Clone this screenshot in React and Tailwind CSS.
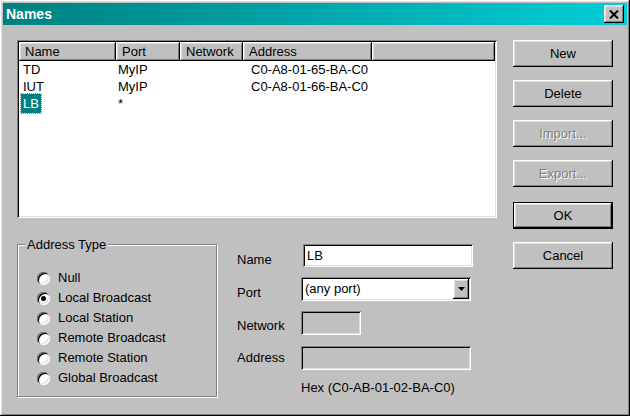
import React from 'react';

const raised = 'shadow-[inset_-1px_-1px_0_#000,inset_1px_1px_0_#fff,inset_-2px_-2px_0_#808080,inset_2px_2px_0_#dfdfdf]';
const sunken = 'shadow-[inset_1px_1px_0_#808080,inset_-1px_-1px_0_#fff,inset_2px_2px_0_#000,inset_-2px_-2px_0_#dfdfdf]';

const rows = [
  { name: 'TD', port: 'MyIP', network: '', address: 'C0-A8-01-65-BA-C0' },
  { name: 'IUT', port: 'MyIP', network: '', address: 'C0-A8-01-66-BA-C0' },
  { name: 'LB', port: '*', network: '', address: '', selected: true },
];

const types = ['Null', 'Local Broadcast', 'Local Station', 'Remote Broadcast', 'Remote Station', 'Global Broadcast'];

function Button({ children, disabled, def }) {
  return (
    <div className={`h-[27px] w-[100px] flex items-center justify-center ${def ? 'mt-[2px] border border-black' : ''}`}>
      <div className={`w-full h-full flex items-center justify-center ${raised}`}>
        <span className={disabled ? 'text-[#808080] [text-shadow:1px_1px_0_#fff]' : 'text-black'}>{children}</span>
      </div>
    </div>
  );
}

function HeaderCell({ w, children }) {
  return (
    <div className={`h-[19px] ${w} flex items-center pl-[6px] ${raised}`}>{children}</div>
  );
}

function Radio({ label, checked }) {
  return (
    <div className="h-[20px] flex items-center gap-[8px]">
      <div className="w-[13px] h-[13px] rounded-full bg-white flex items-center justify-center shadow-[inset_1px_1px_0_#808080,inset_-1px_-1px_0_#fff,inset_2px_2px_0_#000,inset_-2px_-2px_0_#dfdfdf]">
        {checked && <div className="w-[5px] h-[5px] rounded-full bg-black" />}
      </div>
      <span>{label}</span>
    </div>
  );
}

export default function App() {
  return (
    <div className={`w-[630px] h-[416px] bg-[#c0c0c0] p-[3px] flex flex-col text-[13px] text-black ${raised}`}
      style={{ fontFamily: '"Liberation Sans", Arial, sans-serif' }}>
      {/* Title bar */}
      <div className="h-[22px] flex items-center justify-between pl-[3px] pr-[3px] bg-gradient-to-r from-[#008080] to-[#00cfd8]">
        <span className="text-white font-bold text-[14px]">Names</span>
        <div className={`w-[20px] h-[18px] bg-[#c0c0c0] flex items-center justify-center ${raised}`}>
          <svg width="10" height="9" viewBox="0 0 10 9">
            <path d="M1 0.5 L9 8.5 M9 0.5 L1 8.5" stroke="#000" strokeWidth="2" />
          </svg>
        </div>
      </div>

      {/* Body */}
      <div className="flex pl-[14px] pt-[15px] gap-[16px]">
        <div className="w-[480px] flex flex-col">
          {/* List view */}
          <div className={`h-[178px] bg-white p-[2px] ${sunken}`}>
            <div className="flex bg-[#c0c0c0]">
              <HeaderCell w="w-[97px]">Name</HeaderCell>
              <HeaderCell w="w-[64px]">Port</HeaderCell>
              <HeaderCell w="w-[63px]">Network</HeaderCell>
              <HeaderCell w="w-[129px]">Address</HeaderCell>
              <div className={`h-[19px] flex-1 ${raised}`} />
            </div>
            {rows.map((r) => (
              <div key={r.name} className="h-[17px] flex items-center">
                <div className="w-[97px] pl-[2px]">
                  <span className={r.selected ? 'inline-block bg-[#008080] text-white px-[2px] outline outline-1 outline-dotted outline-[#c08080]' : 'pl-[2px]'}>
                    {r.name}
                  </span>
                </div>
                <div className="w-[64px] pl-[2px]">{r.port}</div>
                <div className="w-[63px] pl-[2px]">{r.network}</div>
                <div className="w-[129px] pl-[8px]">{r.address}</div>
              </div>
            ))}
          </div>

          {/* Bottom section */}
          <div className="flex mt-[19px] gap-[20px]">
            <fieldset className="w-[200px] h-[160px] border border-[#808080] shadow-[1px_1px_0_#fff,inset_1px_1px_0_#fff] pl-[19px] pt-[16px]">
              <legend className="ml-[-12px] px-[2px] bg-[#c0c0c0] leading-[15px]">Address Type</legend>
              {types.map((t) => (
                <Radio key={t} label={t} checked={t === 'Local Broadcast'} />
              ))}
            </fieldset>

            <div className="flex flex-col mt-[7px]">
              <div className="flex items-start h-[23px]">
                <span className="w-[66px] pt-[6px]">Name</span>
                <div className={`w-[170px] h-[23px] bg-white flex items-center pl-[4px] ${sunken}`}>LB</div>
              </div>
              <div className="flex items-start h-[24px] mt-[10px]">
                <span className="w-[64px] pt-[6px]">Port</span>
                <div className={`w-[170px] h-[24px] bg-white flex items-center p-[2px] ${sunken}`}>
                  <span className="flex-1 pl-[2px]">(any port)</span>
                  <div className={`w-[16px] h-[20px] bg-[#c0c0c0] flex items-center justify-center ${raised}`}>
                    <svg width="7" height="4" viewBox="0 0 7 4">
                      <path d="M0 0 H7 L3.5 4 Z" fill="#000" />
                    </svg>
                  </div>
                </div>
              </div>
              <div className="flex items-start h-[24px] mt-[10px]">
                <span className="w-[64px] pt-[5px]">Network</span>
                <div className={`w-[60px] h-[24px] ${sunken}`} />
              </div>
              <div className="flex items-center h-[24px] mt-[11px]">
                <span className="w-[64px]">Address</span>
                <div className={`w-[170px] h-[24px] ${sunken}`} />
              </div>
              <div className="pl-[64px] mt-[8px]">Hex (C0-AB-01-02-BA-C0)</div>
            </div>
          </div>
        </div>

        {/* Buttons */}
        <div className="flex flex-col gap-[13px]">
          <Button>New</Button>
          <Button>Delete</Button>
          <Button disabled>Import...</Button>
          <Button disabled>Export...</Button>
          <Button def>OK</Button>
          <Button>Cancel</Button>
        </div>
      </div>
    </div>
  );
}
